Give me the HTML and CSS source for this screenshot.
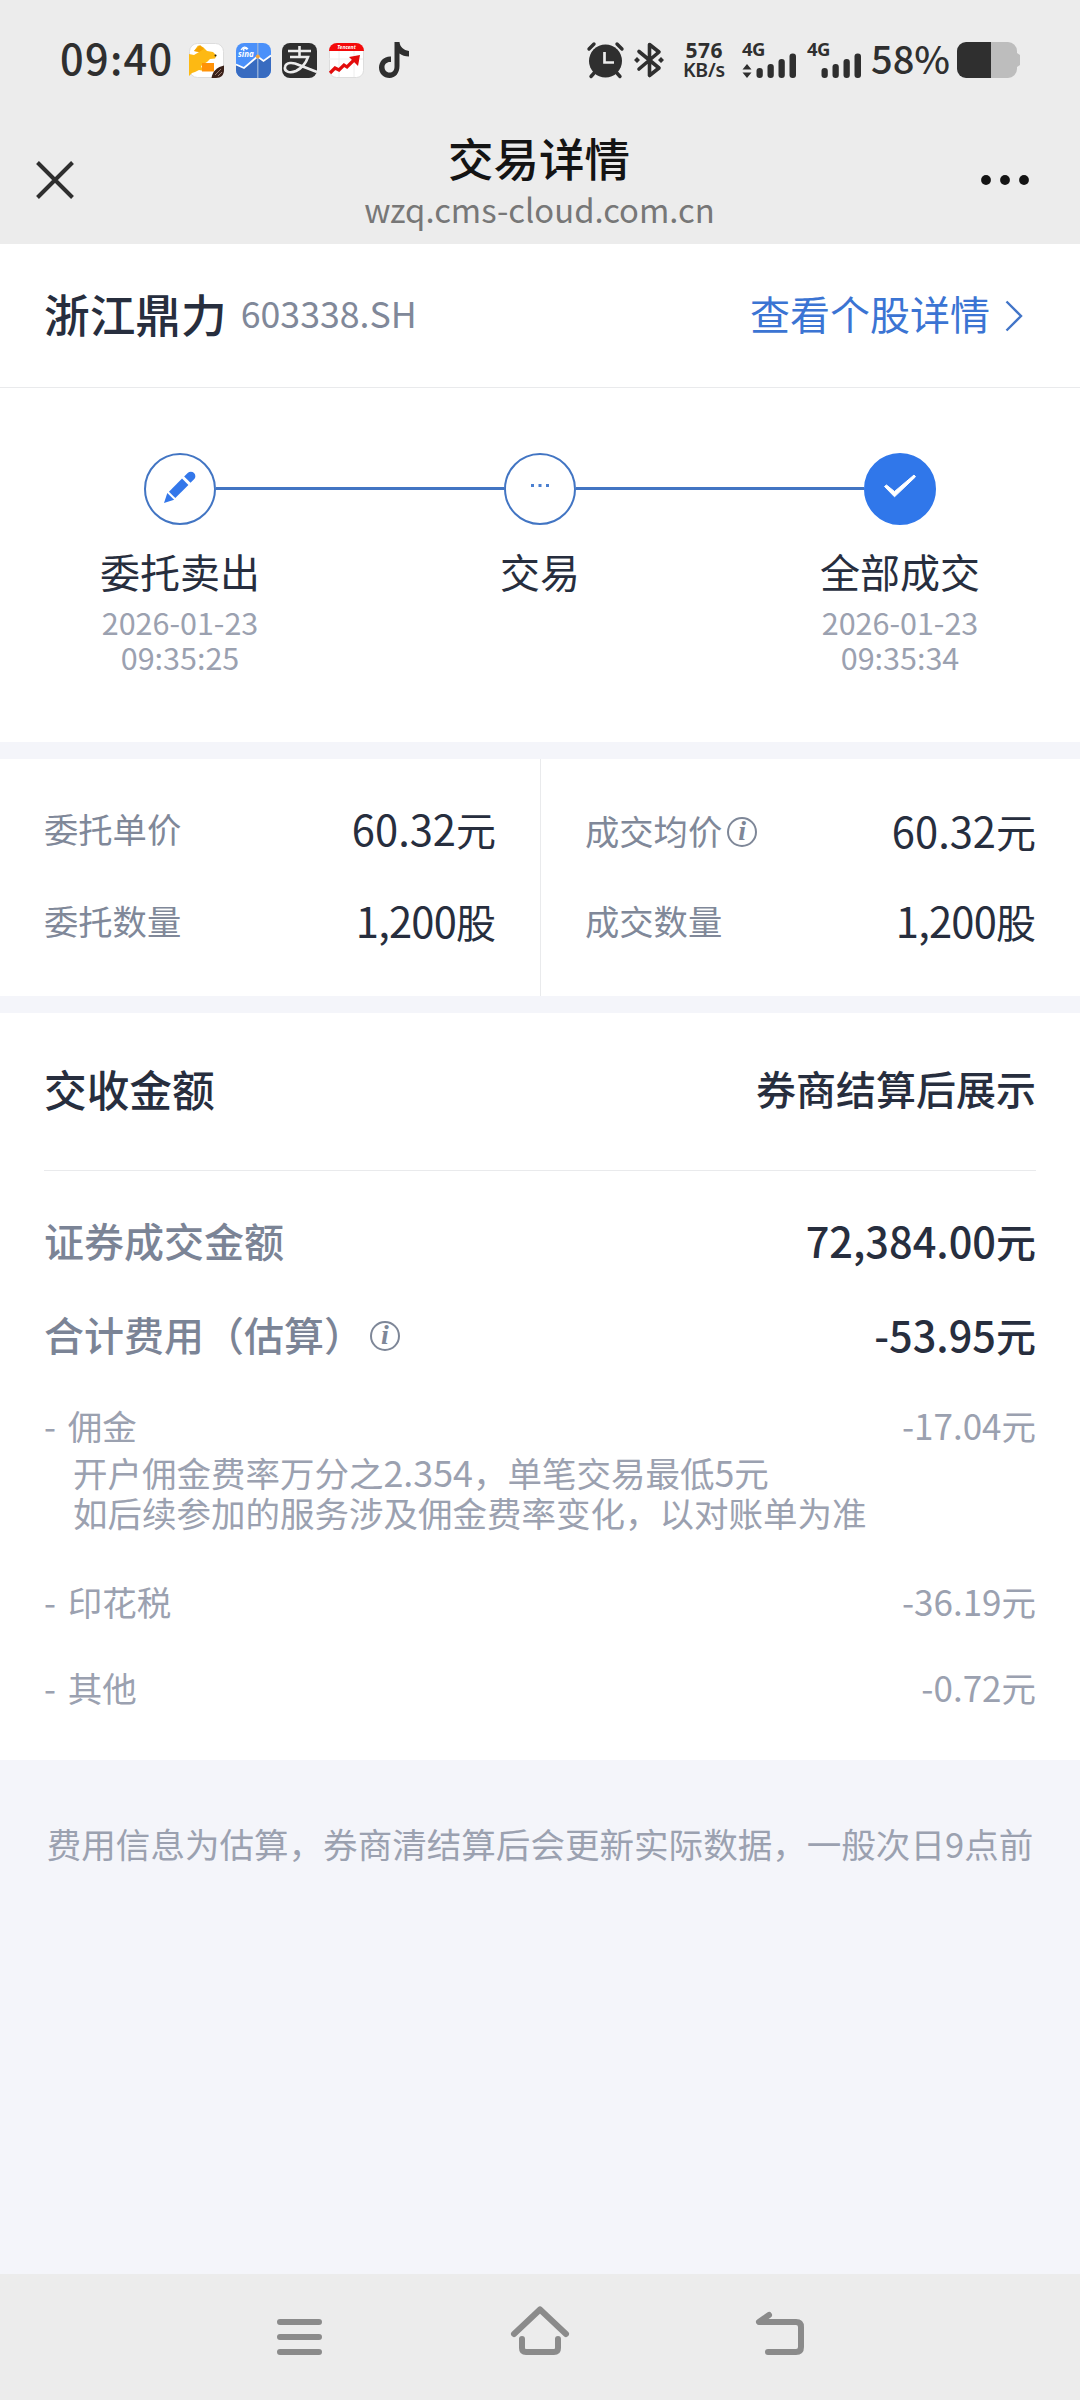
FILE: index.html
```html
<!DOCTYPE html>
<html lang="zh-CN">
<head>
<meta charset="utf-8">
<title>交易详情</title>
<link rel="stylesheet" href="styles.css">
</head>
<body>
<div class="screen">
  <div class="status">
    <div class="status-left">
      <span class="clock">09:40</span>
      <svg class="app" viewBox="0 0 35 35"><rect x=".5" y=".5" width="34" height="34" rx="8" fill="#fff" stroke="#ddd"/><path d="M9 2.500l5 1.500 4 4 6 1 3.500 3.500-1.500 3-5 .5-3 3-5 3-1 2 3 2v2l-5-1-4 2-3 1-3 3V11l5 1 5-3-5-1z" fill="#fdb913"/><path d="M5 8l6-6 4 4-5 3zM7 20l6 4" fill="#f5a300"/><circle cx="26.500" cy="12.500" r="1" fill="#222"/><path d="M13 20h12v8.500H13z" fill="#ff9208"/><path d="M22.500 35c1-7 6-11 12.500-12.500V27c0 5-3 8-8 8z" fill="#3b2119"/><path d="M26 32l6-6M29 33l4-4" stroke="#a08478" stroke-width=".9"/></svg>
      <svg class="app" viewBox="0 0 35 35"><rect width="35" height="35" rx="8" fill="#4a90fa"/><path d="M0 22l8 3 13-12 6 5 8-6v15a8 8 0 0 1-8 8H8a8 8 0 0 1-8-8z" fill="#386bc0"/><path d="M0 21.500l8 3.500 13.500-11.500 6 4.500 7.500-5.500" fill="none" stroke="#fff" stroke-width="1.800"/><path d="M21.800 0v35" stroke="#9ab4d9" stroke-width="1.300"/><circle cx="21.800" cy="13.500" r="2" fill="#f4a640"/><path d="M5 7q3-5 7-1M7 7q2-3 4-.500" fill="none" stroke="#fff" stroke-width="1.300"/><text x="2" y="13.500" class="sina">sina</text></svg>
      <svg class="app" viewBox="0 0 35 35"><rect width="35" height="35" rx="8" fill="#2f2f2f"/><path d="M6 8h23M17.500 3v11M8 14h18c-2 6-6 11-12 14-7 3-12 0-11-4 1-5 8-5 14-2l18 7" fill="none" stroke="#ececec" stroke-width="2.600"/></svg>
      <svg class="app" viewBox="0 0 35 35"><rect x=".5" y=".5" width="34" height="34" rx="7" fill="#fff" stroke="#ddd"/><path d="M0 8a8 8 0 0 1 8-8h19a8 8 0 0 1 8 8z" fill="#f40a0a"/><path d="M0 16h34M10 8v26M25 8v26" stroke="#eee"/><path d="M1 30l5-5 4 2 5-5 3 2 8-8" fill="none" stroke="#e30c0c" stroke-width="3.200"/><path d="M20 14l11-2-2 11z" fill="#e30c0c"/><text x="17.500" y="6" text-anchor="middle" class="tencent">Tencent</text></svg>
      <svg class="tiktok" viewBox="0 0 30 36"><path d="M15.500 0h5c.5 5 4 8 9.500 9v5.500c-4 0-7-1-9.500-3V24c0 7-4 12-10 12S0 31.500 0 25.500c0-6 5-11.500 12-11v5.500c-4-.5-6.500 2-6.500 5s2 5.500 5 5.500 5-2 5-6z" fill="#2f2f2f"/></svg>
    </div>
    <div class="status-right">
      <svg class="alarm" viewBox="0 0 37 36"><g fill="none" stroke="#2f2f2f" stroke-width="3.400" stroke-linecap="round"><path d="M2 7l5-5M35 7l-5-5M8 30l-4 4.500M29 30l4 4.500"/></g><circle cx="18.500" cy="19" r="16.500" fill="#2f2f2f"/><path d="M17.500 10v10.500H27" fill="none" stroke="#ececec" stroke-width="2.700"/></svg>
      <svg class="bt" viewBox="0 0 30 36"><path d="M5 9.500l20 16.500-9.500 7.500v-31L25 10 5 27" fill="none" stroke="#2f2f2f" stroke-width="3.600" stroke-linecap="round" stroke-linejoin="round"/><path d="M3 15l3 3-3 3-3-3zM27 15l3 3-3 3-3-3z" fill="#2f2f2f"/></svg>
      <svg class="speed" viewBox="0 0 42 36"><text x="21" y="15.500" text-anchor="middle" textLength="37">576</text><text x="21" y="34.500" text-anchor="middle" textLength="42" class="unit-s">KB/s</text></svg>
      <svg class="signal" viewBox="0 0 55 36"><text x="0" y="14" class="net">4G</text><path d="M5 22l4.500 5.500h-9zM5 36l-4.500-5.500h9z" fill="#2f2f2f"/><g fill="#2f2f2f"><rect x="14.500" y="26" width="6.300" height="10" rx="3"/><rect x="25.500" y="22" width="6.300" height="14" rx="3"/><rect x="36.500" y="17" width="6.300" height="19" rx="3"/><rect x="47.500" y="11.500" width="6.500" height="24.500" rx="3"/></g></svg>
      <svg class="signal second" viewBox="0 0 55 36"><text x="0" y="14" class="net">4G</text><g fill="#2f2f2f"><rect x="14.500" y="26" width="6.300" height="10" rx="3"/><rect x="25.500" y="22" width="6.300" height="14" rx="3"/><rect x="36.500" y="17" width="6.300" height="19" rx="3"/><rect x="47.500" y="11.500" width="6.500" height="24.500" rx="3"/></g></svg>
      <span class="percent">58%</span>
      <svg class="battery" viewBox="0 0 63 36"><path d="M34 0h17a9 9 0 0 1 9 9v2l3 2v10l-3 2v2a9 9 0 0 1-9 9H34z" fill="#bdbdbd"/><path d="M34 0H9a9 9 0 0 0-9 9v18a9 9 0 0 0 9 9h25z" fill="#2f2f2f"/></svg>
    </div>
  </div>

  <header class="navbar">
    <svg class="close" viewBox="0 0 38 38"><path d="M1.500 1.500l35 35M36.500 1.500l-35 35" stroke="#2e2e2e" stroke-width="4"/></svg>
    <div class="heading">
      <h1>交易详情</h1>
      <p>wzq.cms-cloud.com.cn</p>
    </div>
    <svg class="more" viewBox="0 0 48 10"><g fill="#141414"><circle cx="5" cy="5" r="4.900"/><circle cx="24" cy="5" r="4.900"/><circle cx="43" cy="5" r="4.900"/></g></svg>
  </header>

  <section class="stock">
    <span class="name">浙江鼎力</span>
    <span class="code">603338.SH</span>
    <a class="link">查看个股详情<svg viewBox="0 0 18 32"><path d="M1.500 1.500L16 16 1.500 30.500" fill="none" stroke="#4275c8" stroke-width="2.400"/></svg></a>
  </section>

  <section class="steps">
    <div class="track">
      <span class="node"><svg viewBox="0 0 72 72"><g transform="translate(20 50) rotate(-45)" fill="#3377ea"><path d="M0 0l9.500-4.800v9.600z"/><path d="M11.500-4.500h18.500v9H11.500z"/><path d="M33-4.500h5a4.500 4.500 0 0 1 0 9H33z"/></g></svg></span>
      <i></i>
      <span class="node"><svg viewBox="0 0 72 72"><path d="M27 31h3v3h-3zM34.500 31h3v3h-3zM42 31h3v3h-3z" fill="#4a7fd0"/></svg></span>
      <i></i>
      <span class="node done"><svg viewBox="0 0 72 72"><path d="M20.500 33.500l2-1.500 8 6.500 19.500-16.500 1.500 1.800-21 20z" fill="#fff" stroke="#fff" stroke-linejoin="round"/></svg></span>
    </div>
    <div class="labels">
      <div><b>委托卖出</b><p>2026-01-23</p><p>09:35:25</p></div>
      <div><b>交易</b></div>
      <div><b>全部成交</b><p>2026-01-23</p><p>09:35:34</p></div>
    </div>
  </section>

  <section class="fields">
    <div class="col">
      <div class="field"><span>委托单价</span><strong>60.32<em>元</em></strong></div>
      <div class="field"><span>委托数量</span><strong class="count">1,200<em>股</em></strong></div>
    </div>
    <div class="col right">
      <div class="field"><span>成交均价<i class="info">i</i></span><strong>60.32<em>元</em></strong></div>
      <div class="field"><span>成交数量</span><strong class="count">1,200<em>股</em></strong></div>
    </div>
  </section>

  <section class="settle">
    <div class="total"><b>交收金额</b><span>券商结算后展示</span></div>
    <div class="sums">
      <div class="sum"><span>证券成交金额</span><strong>72,384.00<em>元</em></strong></div>
      <div class="sum"><span>合计费用（估算）<i class="info">i</i></span><strong>-53.95<em>元</em></strong></div>
    </div>
    <div class="fee"><span>- 佣金</span><strong>-17.04<em>元</em></strong></div>
    <p class="hint">开户佣金费率万分之<em>2.354</em>，单笔交易最低<em>5</em>元<br>如后续参加的服务涉及佣金费率变化，以对账单为准</p>
    <div class="fee stamp"><span>- 印花税</span><strong>-36.19<em>元</em></strong></div>
    <div class="fee other"><span>- 其他</span><strong>-0.72<em>元</em></strong></div>
  </section>

  <p class="note">费用信息为估算，券商清结算后会更新实际数据，一般次日9点前</p>

  <nav class="softkeys">
    <svg viewBox="0 0 60 60"><path d="M10 18h39M10 33h39M10 48h39" /></svg>
    <svg viewBox="0 0 60 60"><path d="M4 30l26-24.500L56 30M12 35v9q0 4 4 4h28q4 0 4-4v-9"/></svg>
    <svg viewBox="0 0 60 60"><path d="M19 11L9 18h37q5 0 5 5v20q0 5-5 5H18"/></svg>
  </nav>
</div>
</body>
</html>
```
FILE: styles.css
```css
* { box-sizing: border-box; margin: 0; padding: 0; }
body { background: #f4f5fa; }
em, i { font-style: normal; }
svg { display: block; flex: none; overflow: visible; }

.screen {
  width: 1080px;
  height: 2400px;
  display: flex;
  flex-direction: column;
  overflow: hidden;
  color: #272e3e;
  font-family: "Noto Sans CJK SC", sans-serif;
  white-space: nowrap;
}

/* status bar */
.status {
  height: 115px;
  padding: 0 60px 0 60px;
  display: flex;
  justify-content: space-between;
  align-items: flex-start;
  background: #ececec;
  color: #2f2f2f;
}
.status-left, .status-right { display: flex; align-items: center; height: 36px; margin-top: 42px; }
.clock { width: 117px; font-size: 41.500px; font-weight: 500; line-height: 36px; letter-spacing: 1.300px; margin: -6px 12px 0 0; }
.app { width: 35px; height: 35px; margin-right: 11.500px; }
.tiktok { width: 30px; height: 36px; margin-left: 3.500px; }
.sina { font: italic bold 8px "Noto Sans", sans-serif; fill: #fff; }
.tencent { font: italic bold 5px "Noto Sans", sans-serif; fill: #fff; }
.alarm { width: 37px; height: 36px; }
.bt { width: 30px; height: 36px; margin-left: 10px; }
.speed { width: 42px; height: 36px; margin-left: 19px; font: bold 21px "Noto Sans", sans-serif; fill: #2f2f2f; }
.unit-s { font-size: 19.500px; font-weight: 600; }
.signal { width: 55px; height: 36px; margin-left: 17px; }
.second { margin-left: 10px; }
.net { font: bold 18.500px "Noto Sans", sans-serif; fill: #2f2f2f; letter-spacing: -.5px; }
.percent { width: 76px; margin: -5px 10px 0 9px; font-size: 38px; font-weight: 500; line-height: 36px; }
.battery { width: 63px; height: 36px; }

/* page header */
.navbar {
  height: 129px;
  padding: 0 51px 0 36px;
  display: grid;
  grid-template-columns: 200px 1fr 185px;
  align-items: center;
  background: #ececec;
}
.close { width: 38px; height: 38px; }
.heading { padding-top: 3px; text-align: center; }
.heading h1 { margin-left: -2px; font-size: 45.500px; font-weight: 500; line-height: 50px; color: #141414; }
.heading p { margin: 5px 0 0 -1px; font-size: 32.800px; line-height: 44px; color: #777; }
.more { width: 48px; height: 10px; justify-self: end; }

/* stock */
.stock {
  height: 144px;
  padding: 0 57px 6px 44px;
  display: flex;
  align-items: center;
  background: #fff;
  border-bottom: 1px solid #e9eaec;
}
.name { font-size: 45.700px; font-weight: 500; }
.code { margin-left: 14px; font-size: 35.700px; color: #808899; }
.link { display: flex; align-items: center; margin-left: auto; font-size: 40px; color: #3b74d3; }
.link svg { width: 18px; height: 32px; margin: 6px 0 0 15px; }

/* progress */
.steps { height: 354px; padding-top: 65px; background: #fff; }
.track { display: flex; align-items: center; padding: 0 144px; }
.track i { flex: 1; height: 3px; margin-bottom: 1px; background: #4275c3; }
.node { width: 72px; height: 72px; border: 2px solid #4275c3; border-radius: 50%; }
.node svg { width: 72px; height: 72px; margin: -2px; }
.done { background: #3077ea; border-color: #3077ea; }
.labels { display: grid; grid-template-columns: repeat(3, 360px); text-align: center; }
.labels b { display: block; margin: 21px 0 9px; font-size: 40px; font-weight: 400; line-height: 50px; }
.labels p { font-size: 30.500px; line-height: 35px; color: #9ba1b0; }

/* order fields */
.fields { height: 237px; margin: 17px 0; display: grid; grid-template-columns: 540px 540px; background: #fff; }
.col { display: flex; flex-direction: column; gap: 32px; padding: 39px 44px 0; }
.right { gap: 30px; padding-top: 41px; border-left: 1px solid #e9eaec; }
.field { height: 60px; display: flex; justify-content: space-between; align-items: center; }
.field span, .sum span { display: flex; align-items: center; }
.field span { font-size: 34.300px; color: #808899; }
.field strong { font-size: 41.700px; font-weight: 400; line-height: 60px; }
.field .count { letter-spacing: -.8px; }
.field em { font-size: 40px; letter-spacing: 0; }
.info {
  width: 30px;
  height: 30px;
  margin: 4px 0 0 5px;
  border: 2px solid #7e8798;
  border-radius: 50%;
  color: #7e8798;
  font: italic bold 28px/24px "Liberation Serif", serif;
  text-align: center;
}

/* settlement */
.settle { height: 747px; padding: 0 44px; background: #fff; }
.total {
  height: 158px;
  padding-bottom: 7px;
  display: flex;
  justify-content: space-between;
  align-items: center;
  border-bottom: 1px solid #e9eaec;
  font-weight: 500;
}
.total b { font-size: 42.700px; font-weight: 500; }
.total span { font-size: 40px; }
.sums { padding-top: 22px; }
.sum { height: 94px; display: flex; justify-content: space-between; align-items: center; font-weight: 500; }
.sum span { font-size: 40px; color: #7b8496; }
.sum strong { font-size: 41.500px; font-weight: 500; line-height: 58px; }
.sum em { font-size: 40px; }
.sum .info { margin-left: 6px; }
.fee { height: 46px; margin-top: 21px; display: flex; justify-content: space-between; align-items: center; font-size: 34.500px; color: #9ba1b0; word-spacing: 4px; }
.fee strong { font-size: 35px; font-weight: 400; line-height: 46px; }
.fee em { font-size: 34.500px; }
.hint { margin-top: 4px; padding-left: 29px; font-size: 34.500px; line-height: 40px; color: #9ba1b0; }
.hint em { font-size: 35.800px; line-height: 1; }
.stamp { margin-top: 46px; }
.other { margin-top: 40px; }

.note { flex: 1; padding-top: 58px; text-align: center; font-size: 34.550px; line-height: 50px; color: #9ba1b0; }

/* system navigation */
.softkeys { height: 126px; padding: 30px 150px 0; display: grid; grid-template-columns: repeat(3, 240px); justify-content: center; background: #ececec; }
.softkeys svg { width: 60px; height: 60px; margin: 0 auto; fill: none; stroke: #8b8b8b; stroke-width: 6; stroke-linecap: round; stroke-linejoin: round; }
```
